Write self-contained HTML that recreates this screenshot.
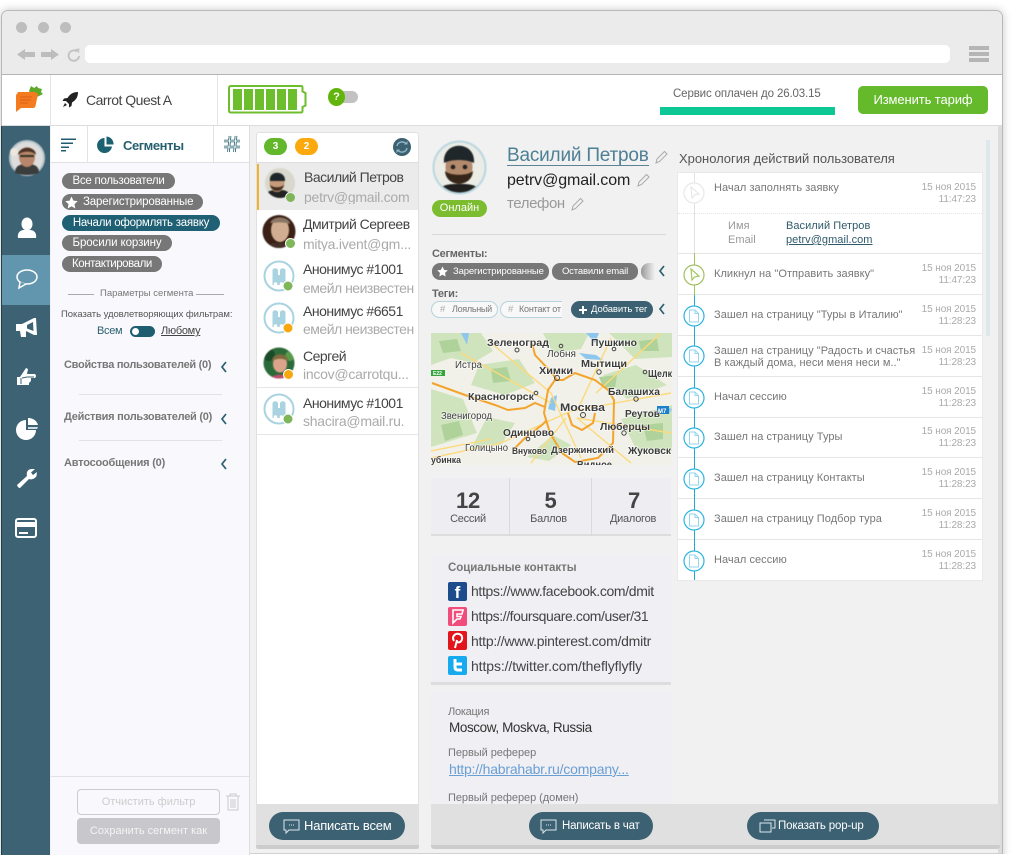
<!DOCTYPE html>
<html lang="ru"><head><meta charset="utf-8"><title>Carrot Quest</title>
<style>
html,body{margin:0;padding:0;background:#fff;width:1024px;height:855px;overflow:hidden}
body{position:relative;font-family:"Liberation Sans",sans-serif;color:#555}
#w{position:absolute;left:0;top:0;width:1024px;height:855px;overflow:hidden;background:#fff}
.a,.t,svg.a{position:absolute}
.t{white-space:nowrap;line-height:1;letter-spacing:-.25px}
.pill{position:absolute;height:16px;line-height:16px;background:#777;color:#fff;border-radius:8px;font-size:11.5px;white-space:nowrap;letter-spacing:-.25px}
.dk{background:#3c6172;color:#fff;border-radius:14px;position:absolute;height:28px;line-height:28px;font-size:12.5px;white-space:nowrap}
.rl{position:absolute;left:678px;width:304px;height:1px;background:#e6e6e6}
.tx{position:absolute;left:714px;font-size:11px;color:#777;white-space:nowrap;line-height:1;letter-spacing:.05px}
.d{position:absolute;width:70px;text-align:right;font-size:10px;line-height:12px;color:#aaa;white-space:nowrap;letter-spacing:-.1px}
.nm{position:absolute;left:303px;font-size:14px;color:#444;line-height:1;white-space:nowrap;letter-spacing:-.5px}
.em{position:absolute;left:303px;font-size:14px;color:#aaa;line-height:1;white-space:nowrap;letter-spacing:-.25px;width:113px;overflow:hidden}
.m text{font-family:"Liberation Sans",sans-serif;font-size:10px;font-weight:bold;fill:#3c3c3c;paint-order:stroke;stroke:#fff;stroke-width:1.5px;stroke-opacity:.65}
.ph{filter:blur(.5px)}
</style></head><body><div id="w">

<!-- window -->
<div class="a" style="left:1px;top:10px;width:1000px;height:860px;background:#f1f1f1;border:1px solid #b9b9b9;border-radius:7px 7px 0 0;box-shadow:0 0 9px rgba(0,0,0,.22)"></div>
<div class="a" style="left:2px;top:11px;width:1000px;height:63px;background:#ebebeb;border-radius:6px 6px 0 0;border-bottom:1px solid #b5b5b5"></div>
<div class="a" style="left:16px;top:22px;width:11px;height:11px;border-radius:50%;background:#bdbdbd"></div>
<div class="a" style="left:38px;top:22px;width:11px;height:11px;border-radius:50%;background:#bdbdbd"></div>
<div class="a" style="left:60px;top:22px;width:11px;height:11px;border-radius:50%;background:#bdbdbd"></div>
<svg class="a" style="left:16px;top:47px" width="66" height="15" viewBox="0 0 66 15"><path d="M1 7.5 9 2V5H19V10H9V13Z" fill="#bdbdbd"/><path d="M43 7.5 35 2V5H25V10H35V13Z" fill="#bdbdbd"/><path d="M61 4.5A5.2 5.2 0 1 0 63 9" fill="none" stroke="#c4c4c4" stroke-width="2"/><path d="M59 2 63.5 1.5 63 6.5Z" fill="#c4c4c4"/></svg>
<div class="a" style="left:85px;top:45px;width:865px;height:18px;background:#fff;border-radius:5px"></div>
<div class="a" style="left:969px;top:46px;width:20px;height:4px;background:#b5b5b5"></div>
<div class="a" style="left:969px;top:52px;width:20px;height:4px;background:#b5b5b5"></div>
<div class="a" style="left:969px;top:58px;width:20px;height:4px;background:#b5b5b5"></div>

<!-- header -->
<div class="a" style="left:2px;top:75px;width:1000px;height:50px;background:#fff;border-bottom:1px solid #ddd"></div>
<div class="a" style="left:50px;top:75px;width:1px;height:50px;background:#e4e4e4"></div>
<div class="a" style="left:217px;top:75px;width:1px;height:50px;background:#e4e4e4"></div>
<svg class="a" style="left:14px;top:85px" width="30" height="29" viewBox="0 0 30 29"><path d="M15 6 17 1 20 3 23 1 24 3 28 4 27 7 29 9 23 12 17 9Z" fill="#5ea82a"/><path d="M3 9Q2 9 2 11V27L7 23H19Q21 23 21.5 21L24 9Q22 7 20 7H4Z" fill="#f47b20"/><path d="M6 12H18M6 15H17M6 18H14" stroke="#d8621a" stroke-width="1"/></svg>
<svg class="a" style="left:62px;top:91px" width="17" height="17" viewBox="0 0 17 17"><path d="M16 1C11 1 8 3 5.5 7L2 7.5 .5 10 4 10 7 13 7 16.5 9.5 15 10 11.5C14 9 16 6 16 1Z" fill="#222"/><path d="M3 12 1 16 5 14Z" fill="#222"/></svg>
<div class="t" style="left:86px;top:93px;font-size:14px;color:#444;letter-spacing:-.5px">Carrot Quest A</div>
<svg class="a" style="left:228px;top:85px" width="79" height="29" viewBox="0 0 79 29"><path d="M3 1H73.500Q74.500 1 74.500 3V6.500L77.500 8V20.500L74.500 22V25.500Q74.500 27.500 73 27.500H3Q1 27.500 1 25.500V3Q1 1 3 1Z" fill="#fff" stroke="#6dbe2d" stroke-width="2"/></svg>
<div class="a" style="left:233px;top:89px;width:9px;height:21px;background:#6dbe2d"></div>
<div class="a" style="left:244px;top:89px;width:9px;height:21px;background:#6dbe2d"></div>
<div class="a" style="left:255px;top:89px;width:9px;height:21px;background:#6dbe2d"></div>
<div class="a" style="left:266px;top:89px;width:9px;height:21px;background:#6dbe2d"></div>
<div class="a" style="left:277px;top:89px;width:9px;height:21px;background:#6dbe2d"></div>
<div class="a" style="left:288px;top:89px;width:9px;height:21px;background:#6dbe2d"></div>
<div class="a" style="left:335px;top:91px;width:23px;height:12px;background:#c2c2c2;border-radius:7px"></div>
<div class="a" style="left:328px;top:88px;width:17px;height:18px;border-radius:50%;background:#62b50d;color:#fff;font:bold 11px/18px 'Liberation Sans',sans-serif;text-align:center">?</div>
<div class="t" style="left:673px;top:89px;font-size:11.5px;color:#666;letter-spacing:-.13px">Сервис оплачен до 26.03.15</div>
<div class="a" style="left:660px;top:107px;width:175px;height:8px;background:#0dc794"></div>
<div class="a" style="left:858px;top:86px;width:130px;height:28px;background:#64ba2a;border-radius:5px;color:#fff;font-size:13px;line-height:28px;text-align:center;letter-spacing:-.1px">Изменить тариф</div>

<!-- sidebar -->
<div class="a" style="left:2px;top:126px;width:48px;height:729px;background:#3d6274"></div>
<div class="a" style="left:1px;top:126px;width:1px;height:729px;background:#223f4c"></div>
<div class="a" style="left:2px;top:255px;width:48px;height:50px;background:#6296ae"></div>
<svg class="a ph" style="left:9px;top:140px" width="36" height="36" viewBox="0 0 36 36"><circle cx="18" cy="18" r="17" fill="#ddd" stroke="#b9c6cc" stroke-width="2"/><path d="M6 33C6 25 12 24 18 24S30 25 30 33Q18 37 6 33Z" fill="#3b3d3c"/><ellipse cx="18" cy="17" rx="8" ry="10" fill="#b8866a"/><path d="M9 15C9 6 27 5 27 15 24 11 14 10 9 15Z" fill="#4c3425"/><path d="M11 16H25" stroke="#332" stroke-width="2"/><circle cx="5" cy="12" r="4" fill="#ece8dd"/></svg>
<svg class="a" style="left:14px;top:217px" width="26" height="22" viewBox="0 0 26 22"><ellipse cx="13" cy="7" rx="5.5" ry="6.5" fill="#fff"/><path d="M4 21C3 15 7 13 10 13H16C19 13 23 15 22 21Z" fill="#fff"/></svg>
<svg class="a" style="left:14px;top:267px" width="26" height="24" viewBox="0 0 26 24"><ellipse cx="13" cy="10" rx="10" ry="7" fill="none" stroke="#fff" stroke-width="1.500"/><path d="M6 15 5 21 12 17" fill="#6296ae" stroke="#fff" stroke-width="1.500"/></svg>
<svg class="a" style="left:14px;top:316px" width="26" height="24" viewBox="0 0 26 24"><path d="M2 8H8L20 2 22 2 23 19 20 19 12 15 12 21 7 21 6 15 2 15Z" fill="#fff"/><path d="M13 9 19 6 19.5 15 13 12.5Z" fill="#3d6274"/></svg>
<svg class="a" style="left:14px;top:366px" width="26" height="24" viewBox="0 0 26 24"><path d="M3 11H6L12 2 14 3 13 8H21Q23 10 21 12H17V15L15 17V19H6V19H3Z" fill="#fff"/><path d="M7 12V18M8 12 13 11H20" fill="none" stroke="#3d6274" stroke-width="1"/></svg>
<svg class="a" style="left:14px;top:416px" width="26" height="24" viewBox="0 0 26 24"><path d="M12 4A10 10 0 1 0 22 14H12Z" fill="#fff"/><path d="M14 2A10 10 0 0 1 24 9H14Z" fill="#fff"/><path d="M14 11H24A10 10 0 0 1 23 13H14Z" fill="#cfdde3"/></svg>
<svg class="a" style="left:15px;top:466px" width="24" height="24" viewBox="0 0 24 24"><path d="M2 19 12 10C11 6 13 3 17 3L20 3 16 6.5 18 9 22 6 21.5 10C20 13 16 14 14 13L5 22Q3 22 2 19Z" fill="#fff"/></svg>
<div class="a" style="left:15px;top:518px;width:22px;height:20px;border:2px solid #fff;border-radius:3px;box-sizing:border-box"></div>
<div class="a" style="left:15px;top:522px;width:22px;height:5px;background:#fff"></div>
<div class="a" style="left:19px;top:532px;width:9px;height:2px;background:#fff"></div>

<!-- left panel -->
<div class="a" style="left:51px;top:126px;width:198px;height:729px;background:#f9f9fd;border-right:1px solid #ddd"></div>
<div class="a" style="left:51px;top:126px;width:198px;height:36px;background:#fff;border-bottom:1px solid #e0e0e6"></div>
<div class="a" style="left:87px;top:126px;width:1px;height:36px;background:#e2e2e8"></div>
<div class="a" style="left:213px;top:126px;width:1px;height:36px;background:#e2e2e8"></div>
<svg class="a" style="left:60px;top:137px" width="18" height="16" viewBox="0 0 18 16"><path d="M1 1.5H16V3H1ZM1 5.500H13V7H1ZM1 9.500H9V11H1ZM1 13H6V14.500H1Z" fill="#1f5e6e"/></svg>
<svg class="a" style="left:96px;top:135px" width="20" height="20" viewBox="0 0 20 20"><path d="M8.500 3A7.500 7.500 0 1 0 16 11.500H8.500Z" fill="#1c6170"/><path d="M10.500 1.500A7.500 7.500 0 0 1 17.500 9.500H10.500Z" fill="#1c6170"/></svg>
<div class="t" style="left:123px;top:139px;font-size:13px;font-weight:bold;color:#26606f;letter-spacing:-.45px">Сегменты</div>
<svg class="a" style="left:223px;top:135px" width="18" height="18" viewBox="0 0 18 18"><path d="M7 1 5.500 17M13 1 11.500 17M1 6H17M1 12H17" stroke="#1f5e6e" stroke-width="2.600" fill="none"/><path d="M7 1 5.500 17M13 1 11.500 17M1 6H17M1 12H17" stroke="#fff" stroke-width="1" fill="none"/></svg>

<div class="pill" style="left:62px;top:173px;width:113px;text-align:center">Все пользователи</div>
<div class="pill" style="left:62px;top:194px;width:141px;padding-left:21px;box-sizing:border-box;letter-spacing:-.15px">Зарегистрированные</div>
<svg class="a" style="left:65px;top:196px" width="13" height="13" viewBox="0 0 24 24"><path d="M12 1 15.500 8.500 23.500 9.500 17.500 15 19 23 12 19 5 23 6.500 15 .5 9.500 8.500 8.500Z" fill="#fff"/></svg>
<div class="pill" style="left:62px;top:215px;width:158px;background:#1f6074;text-align:center">Начали оформлять заявку</div>
<div class="pill" style="left:62px;top:235px;width:110px;text-align:center;letter-spacing:-.1px">Бросили корзину</div>
<div class="pill" style="left:62px;top:256px;width:100px;padding-left:10px;box-sizing:border-box;letter-spacing:-.45px">Контактировали</div>

<div class="a" style="left:68px;top:294px;width:26px;height:1px;background:#aaa"></div>
<div class="a" style="left:196px;top:294px;width:28px;height:1px;background:#aaa"></div>
<div class="t" style="left:100px;top:289px;font-size:9.500px;color:#777;letter-spacing:0">Параметры сегмента</div>
<div class="t" style="left:61px;top:310px;font-size:9.500px;color:#555;letter-spacing:-.05px">Показать удовлетворяющих фильтрам:</div>
<div class="t" style="left:97px;top:326px;font-size:11px;color:#2c5f6e;letter-spacing:-.3px">Всем</div>
<div class="a" style="left:130px;top:326px;width:25px;height:11px;background:#1f5e70;border-radius:6px"></div>
<div class="a" style="left:132px;top:328px;width:7px;height:7px;background:#fff;border-radius:50%"></div>
<div class="t" style="left:161px;top:326px;font-size:11px;color:#444;letter-spacing:-.3px;text-decoration:underline">Любому</div>
<div class="t" style="left:64px;top:360px;font-size:11px;font-weight:bold;color:#777;letter-spacing:-.28px">Свойства пользователей (0)</div>
<svg class="a" style="left:220px;top:361px" width="8" height="12" viewBox="0 0 8 12"><path d="M6 1 2 6 6 11" stroke="#2b6070" stroke-width="1.700" fill="none"/></svg>
<div class="a" style="left:79px;top:394px;width:143px;height:1px;background:#e2e2e8"></div>
<div class="t" style="left:64px;top:412px;font-size:11px;font-weight:bold;color:#777;letter-spacing:-.25px">Действия пользователей (0)</div>
<svg class="a" style="left:220px;top:413px" width="8" height="12" viewBox="0 0 8 12"><path d="M6 1 2 6 6 11" stroke="#2b6070" stroke-width="1.700" fill="none"/></svg>
<div class="a" style="left:79px;top:440px;width:143px;height:1px;background:#e2e2e8"></div>
<div class="t" style="left:64px;top:458px;font-size:11px;font-weight:bold;color:#777;letter-spacing:-.2px">Автосообщения (0)</div>
<svg class="a" style="left:220px;top:458px" width="8" height="12" viewBox="0 0 8 12"><path d="M6 1 2 6 6 11" stroke="#2b6070" stroke-width="1.700" fill="none"/></svg>

<div class="a" style="left:51px;top:776px;width:198px;height:1px;background:#e0e0e6"></div>
<div class="a" style="left:77px;top:789px;width:143px;height:26px;box-sizing:border-box;border:1px solid #ccc;border-radius:4px;color:#ccc;font-size:11px;line-height:24px;text-align:center">Отчистить фильтр</div>
<div class="a" style="left:77px;top:818px;width:143px;height:26px;background:#c8c8cc;border-radius:4px;color:#f4f4f4;font-size:11px;line-height:26px;text-align:center">Сохранить сегмент как</div>
<svg class="a" style="left:225px;top:793px" width="16" height="18" viewBox="0 0 16 18"><path d="M1 3H15M5 3V1H11V3M3 3V17H13V3M6 6V15M8 6V15M10 6V15" fill="none" stroke="#ccc" stroke-width="1"/></svg>

<!-- conversations -->
<div class="a" style="left:256px;top:132px;width:161px;height:715px;background:#fff;border:1px solid #e0e0e0;border-radius:3px 3px 0 0"></div>
<div class="a" style="left:257px;top:162px;width:161px;height:1px;background:#ddd"></div>
<div class="a" style="left:264px;top:138px;width:23px;height:17px;border-radius:9px;background:#62b82a;color:#fff;font:bold 10px/17px 'Liberation Sans',sans-serif;text-align:center">3</div>
<div class="a" style="left:295px;top:138px;width:23px;height:17px;border-radius:9px;background:#fca90e;color:#fff;font:bold 10px/17px 'Liberation Sans',sans-serif;text-align:center">2</div>
<svg class="a" style="left:393px;top:138px" width="18" height="18" viewBox="0 0 18 18"><circle cx="9" cy="9" r="9" fill="#3c6172"/><path d="M4 8A5 5 0 0 1 13 6M14 10A5 5 0 0 1 5 12" fill="none" stroke="#8fb7c6" stroke-width="1.400"/><path d="M11 6.500H14.500V3ZM7 11.500H3.500V15Z" fill="#8fb7c6"/></svg>
<div class="a" style="left:257px;top:163px;width:161px;height:47px;background:#ebebeb"></div>
<div class="a" style="left:257px;top:164px;width:2px;height:46px;background:#f1b32d"></div>

<svg class="a ph" style="left:265px;top:168px" width="31" height="34" viewBox="0 0 31 34"><defs><clipPath id="c1"><circle cx="15" cy="15" r="15"/></clipPath></defs><g clip-path="url(#c1)"><rect width="30" height="30" fill="#d8d8cc"/><path d="M0 30C0 22 8 22 15 22S24 24 26 30Z" fill="#222"/><ellipse cx="12" cy="15" rx="7.500" ry="9" fill="#c69a7b"/><path d="M5 13C3 2 21 2 20 13Z" fill="#20272a"/><path d="M5 17C7 25 17 25 19 17 15 20 9 20 5 17Z" fill="#443022"/></g></svg>
<div class="a" style="left:285px;top:192px;width:11px;height:11px;border-radius:50%;background:#7fb659;border:1px solid #ebebeb;box-sizing:border-box"></div>
<svg class="a ph" style="left:262px;top:215px" width="34" height="34" viewBox="0 0 34 34"><defs><clipPath id="c2"><circle cx="17" cy="16.500" r="16.500"/></clipPath></defs><g clip-path="url(#c2)"><rect width="34" height="34" fill="#3a2015"/><ellipse cx="18" cy="15" rx="9" ry="12" fill="#d1ae91"/><path d="M8 8C12 -1 28 2 28 9 20 6 12 8 8 8Z" fill="#8a7765"/><path d="M9 28H26V34H9Z" fill="#443028"/></g></svg>
<div class="a" style="left:285px;top:238px;width:11px;height:11px;border-radius:50%;background:#7fb659;border:1px solid #fff;box-sizing:border-box"></div>
<svg class="a" style="left:263px;top:260px" width="33" height="34" viewBox="0 0 33 34"><circle cx="16" cy="16" r="14.500" fill="#fff" stroke="#a9d3e0" stroke-width="2"/><path d="M9.500 25V10A3 3 0 0 1 15 10V15H17V10A3 3 0 0 1 22.500 10V25Z" fill="#a9d3e0"/><circle cx="12.500" cy="24" r="1.800" fill="#fff"/><circle cx="18.500" cy="24" r="1.800" fill="#fff"/><circle cx="25" cy="26" r="5" fill="#7fb659" stroke="#fff"/></svg>
<svg class="a" style="left:263px;top:302px" width="33" height="34" viewBox="0 0 33 34"><circle cx="16" cy="16" r="14.500" fill="#fff" stroke="#a9d3e0" stroke-width="2"/><path d="M9.500 25V10A3 3 0 0 1 15 10V15H17V10A3 3 0 0 1 22.500 10V25Z" fill="#a9d3e0"/><circle cx="12.500" cy="24" r="1.800" fill="#fff"/><circle cx="18.500" cy="24" r="1.800" fill="#fff"/><circle cx="25" cy="26" r="5" fill="#f9a70f" stroke="#fff"/></svg>
<svg class="a ph" style="left:263px;top:347px" width="33" height="34" viewBox="0 0 33 34"><defs><clipPath id="c3"><circle cx="16" cy="16" r="15.500"/></clipPath></defs><g clip-path="url(#c3)"><rect width="33" height="33" fill="#2d6a3a"/><circle cx="6" cy="8" r="6" fill="#1b4a28"/><circle cx="27" cy="9" r="5" fill="#5a9a4c"/><ellipse cx="17" cy="17" rx="7" ry="8.500" fill="#dca48a"/><path d="M9 14C9 5 25 5 25 14 20 11 14 11 9 14Z" fill="#7f6a3f"/><path d="M7 33C8 26 26 26 27 33Z" fill="#c24d6a"/></g></svg>
<div class="a" style="left:283px;top:369px;width:11px;height:11px;border-radius:50%;background:#f9a70f;border:1px solid #fff;box-sizing:border-box"></div>
<svg class="a" style="left:263px;top:393px" width="33" height="34" viewBox="0 0 33 34"><circle cx="16" cy="16" r="14.500" fill="#fff" stroke="#a9d3e0" stroke-width="2"/><path d="M9.500 25V10A3 3 0 0 1 15 10V15H17V10A3 3 0 0 1 22.500 10V25Z" fill="#a9d3e0"/><circle cx="12.500" cy="24" r="1.800" fill="#fff"/><circle cx="18.500" cy="24" r="1.800" fill="#fff"/><circle cx="25" cy="26" r="5" fill="#7fb659" stroke="#fff"/></svg>

<div class="nm" style="left:304px;top:170px">Василий Петров</div><div class="em" style="left:304px;top:190px">petrv@gmail.com</div>
<div class="nm" style="top:217px">Дмитрий Сергеев</div><div class="em" style="top:237px">mitya.ivent@gm...</div>
<div class="nm" style="top:262px">Анонимус #1001</div><div class="em" style="top:281px;letter-spacing:-.5px">емейл неизвестен</div>
<div class="nm" style="top:304px">Анонимус #6651</div><div class="em" style="top:322px;letter-spacing:-.5px">емейл неизвестен</div>
<div class="a" style="left:257px;top:387px;width:161px;height:1px;background:#e6e6e6"></div>
<div class="nm" style="top:349px">Сергей</div><div class="em" style="top:367px">incov@carrotqu...</div>
<div class="nm" style="top:396px">Анонимус #1001</div><div class="em" style="top:414px">shacira@mail.ru.</div>
<div class="a" style="left:257px;top:434px;width:161px;height:1px;background:#e6e6e6"></div>

<div class="a" style="left:256px;top:804px;width:163px;height:41px;background:#e0e0e0;border-bottom:4px solid #ccc;border-radius:0 0 3px 3px"></div>
<div class="dk" style="left:269px;top:812px;width:136px;padding-left:35px;box-sizing:border-box;font-size:13px;letter-spacing:-.2px">Написать всем</div>
<svg class="a" style="left:283px;top:819px" width="17" height="16" viewBox="0 0 17 16"><path d="M1 1H16V11H6L3 14V11H1Z" fill="none" stroke="#dce7ec"/><path d="M6 6H7M8 6H9M10 6H11" stroke="#dce7ec"/></svg>

<!-- profile -->
<svg class="a ph" style="left:432px;top:140px" width="55" height="55" viewBox="0 0 55 55"><defs><clipPath id="c4"><circle cx="27.500" cy="27.500" r="25"/></clipPath></defs><circle cx="27.500" cy="27.500" r="27" fill="#b8d6e0"/><g clip-path="url(#c4)"><rect width="55" height="55" fill="#ececE6"/><path d="M4 55C8 44 16 44 27 44S47 44 50 55Z" fill="#202020"/><ellipse cx="27" cy="27" rx="13.500" ry="17" fill="#b48a6c"/><path d="M12 23C10 0 44 0 42 23 34 19 20 19 12 23Z" fill="#20272a"/><path d="M13 31C14 48 40 48 41 31 36 36 18 36 13 31Z" fill="#362619"/><circle cx="21" cy="27" r="2.300" fill="#222"/><circle cx="33" cy="27" r="2.300" fill="#222"/></g></svg>
<div class="a" style="left:432px;top:200px;width:55px;height:17px;border-radius:9px;background:#7cbc2f;color:#fff;font-size:11px;line-height:17px;text-align:center">Онлайн</div>
<div class="t" style="left:507px;top:146px;font-size:19px;color:#4d7f95;letter-spacing:-.2px;border-bottom:1px solid #5b8394">Василий Петров</div>
<div class="t" style="left:507px;top:173px;font-size:16px;color:#222;letter-spacing:-.1px">petrv@gmail.com</div>
<div class="t" style="left:507px;top:196px;font-size:15px;color:#999;letter-spacing:-.4px">телефон</div>
<svg class="a" style="left:655px;top:150px" width="13" height="14" viewBox="0 0 13 14"><path d="M1 13 2 9 9.500 1.500 12 4 4.500 11.500Z" fill="none" stroke="#aaa"/></svg>
<svg class="a" style="left:637px;top:173px" width="13" height="14" viewBox="0 0 13 14"><path d="M1 13 2 9 9.500 1.500 12 4 4.500 11.500Z" fill="none" stroke="#aaa"/></svg>
<svg class="a" style="left:571px;top:197px" width="13" height="14" viewBox="0 0 13 14"><path d="M1 13 2 9 9.500 1.500 12 4 4.500 11.500Z" fill="none" stroke="#aaa"/></svg>
<div class="a" style="left:432px;top:234px;width:234px;height:1px;background:#d9d9d9"></div>
<div class="t" style="left:432px;top:249px;font-size:11px;font-weight:bold;color:#666;letter-spacing:-.3px">Сегменты:</div>
<div class="pill" style="left:432px;top:263px;width:117px;height:17px;line-height:17px;font-size:9.500px;padding-left:21px;box-sizing:border-box;letter-spacing:-.15px">Зарегистрированные</div>
<svg class="a" style="left:437px;top:266px" width="11" height="11" viewBox="0 0 24 24"><path d="M12 1 15.500 8.500 23.500 9.500 17.500 15 19 23 12 19 5 23 6.500 15 .5 9.500 8.500 8.500Z" fill="#fff"/></svg>
<div class="pill" style="left:552px;top:263px;width:86px;height:17px;line-height:17px;font-size:9.500px;text-align:center;letter-spacing:-.15px">Оставили email</div>
<div class="a" style="left:641px;top:263px;width:14px;height:17px;background:linear-gradient(90deg,#999,#f2f2f2);border-radius:8px 0 0 8px"></div>
<svg class="a" style="left:658px;top:265px" width="8" height="12" viewBox="0 0 8 12"><path d="M6 1 2 6 6 11" stroke="#2b6070" stroke-width="1.700" fill="none"/></svg>
<div class="t" style="left:432px;top:289px;font-size:11px;font-weight:bold;color:#666">Теги:</div>
<div class="a" style="left:431px;top:301px;width:67px;height:17px;border:1px solid #b6d3dc;border-radius:9px;box-sizing:border-box;background:#f8f8f8"></div>
<div class="t" style="left:440px;top:305px;font-size:9.500px;color:#aaa">#</div>
<div class="t" style="left:452px;top:305px;font-size:9px;color:#777;letter-spacing:-.3px">Лояльный</div>
<div class="a" style="left:500px;top:301px;width:62px;height:17px;border:1px solid #b6d3dc;border-right:0;border-radius:9px 0 0 9px;box-sizing:border-box;background:#f8f8f8"></div>
<div class="t" style="left:508px;top:305px;font-size:9.500px;color:#aaa">#</div>
<div class="t" style="left:519px;top:305px;font-size:9px;color:#777;letter-spacing:-.2px;width:42px;overflow:hidden">Контакт от</div>
<div class="a" style="left:571px;top:301px;width:82px;height:17px;border-radius:9px;background:#3c6172;color:#fff;font-size:9.500px;line-height:17px;padding-left:20px;box-sizing:border-box;letter-spacing:-.1px;white-space:nowrap">Добавить тег</div>
<div class="a" style="left:579px;top:309px;width:8px;height:2px;background:#fff"></div>
<div class="a" style="left:582px;top:306px;width:2px;height:8px;background:#fff"></div>
<svg class="a" style="left:658px;top:303px" width="8" height="12" viewBox="0 0 8 12"><path d="M6 1 2 6 6 11" stroke="#2b6070" stroke-width="1.700" fill="none"/></svg>

<!-- map -->
<svg class="a" style="left:431px;top:333px;filter:blur(.35px)" width="241" height="132" viewBox="0 0 241 132">
<rect width="241" height="132" fill="#f1f1e9"/>
<g fill="#cfe4bd"><path d="M0 0H50L62 18 42 30 20 25 0 32Z"/><path d="M48 32 88 26 104 50 74 62 40 52Z"/><path d="M0 56 32 66 46 100 0 114Z"/><path d="M56 84 84 90 70 112 40 116Z"/><path d="M172 42 205 32 236 52 196 66Z"/><path d="M112 0H158L150 16 122 20Z"/><path d="M190 86 241 72V118H206Z"/><path d="M178 0H241V24L204 26Z"/><path d="M122 102 140 112 118 128 96 124Z"/></g>
<g fill="#aed29a"><path d="M8 8 26 6 30 18 12 20Z"/><path d="M60 36 76 34 80 48 62 50Z"/><path d="M10 92 28 88 32 102 14 108Z"/><path d="M208 8 226 6 228 18 210 18Z"/><path d="M212 92 232 90 232 106 216 108Z"/><path d="M168 44 186 42 184 56 172 54Z"/></g>
<g fill="#8fc6ee"><path d="M30 0 38 0 36 12Z"/><path d="M148 20 165 22 172 27 155 26Z"/><path d="M155 0H168L164 10Z"/><path d="M120 65 126 62 124 78 117 76Z"/><path d="M232 73 241 76 238 81Z"/></g>
<g fill="none" stroke="#fdd978" stroke-width="1.400"><path d="M0 125 70 110 140 78 240 60"/><path d="M60 10 120 60 150 125"/><path d="M146 85 200 130"/><path d="M135 85 100 130"/><path d="M146 78 180 5"/><path d="M146 85 240 100"/><path d="M30 20 120 70"/><path d="M230 0 165 60"/><path d="M0 118 60 106"/></g>
<g fill="none" stroke="#f3a42c" stroke-width="2"><path d="M124 47 117 57 113 80 119 100 131 120 144 129 167 125 182 110 183 67 177 57 164 47 144 40 132 47Z"/><path d="M1 50 34 62 64 72 77 77 94 75 104 70 114 74"/><path d="M101 10 104 22 121 40 126 47"/><path d="M82 117 94 105 111 92 116 87"/><path d="M137 80 141 92 151 97 162 90 164 80"/></g>
<rect x="0" y="37" width="14" height="6" fill="#36a33b"/>
<rect x="226" y="73" width="12" height="8" fill="#1c7fc9"/>
<g class="m">
<text x="56" y="13" textLength="62" lengthAdjust="spacingAndGlyphs">Зеленоград</text>
<text x="116" y="24" textLength="29" lengthAdjust="spacingAndGlyphs" style="font-weight:normal">Лобня</text>
<text x="160" y="13" textLength="46" lengthAdjust="spacingAndGlyphs">Пушкино</text>
<text x="24" y="35" textLength="27" lengthAdjust="spacingAndGlyphs" style="font-weight:normal">Истра</text>
<text x="108" y="41" textLength="34" lengthAdjust="spacingAndGlyphs">Химки</text>
<text x="150" y="34" textLength="46" lengthAdjust="spacingAndGlyphs">Мытищи</text>
<text x="217" y="44" textLength="24" lengthAdjust="spacingAndGlyphs">Щелк</text>
<text x="37" y="67" textLength="66" lengthAdjust="spacingAndGlyphs">Красногорск</text>
<text x="177" y="62" textLength="52" lengthAdjust="spacingAndGlyphs">Балашиха</text>
<text x="129" y="78" textLength="45" lengthAdjust="spacingAndGlyphs" style="font-size:11px">Москва</text>
<text x="10" y="86" textLength="51" lengthAdjust="spacingAndGlyphs" style="font-weight:normal">Звенигород</text>
<text x="194" y="84" textLength="35" lengthAdjust="spacingAndGlyphs">Реутов</text>
<text x="169" y="97" textLength="50" lengthAdjust="spacingAndGlyphs">Люберцы</text>
<text x="72" y="103" textLength="51" lengthAdjust="spacingAndGlyphs">Одинцово</text>
<text x="34" y="118" textLength="43" lengthAdjust="spacingAndGlyphs" style="font-weight:normal">Голицыно</text>
<text x="81" y="121" textLength="35" lengthAdjust="spacingAndGlyphs" style="font-size:9px">Внуково</text>
<text x="120" y="120" textLength="63" lengthAdjust="spacingAndGlyphs" style="font-size:9px">Дзержинский</text>
<text x="197" y="121" textLength="43" lengthAdjust="spacingAndGlyphs">Жуковск</text>
<text x="0" y="130" textLength="30" lengthAdjust="spacingAndGlyphs" style="font-size:9px">убинка</text>
<text x="146" y="135" textLength="35" lengthAdjust="spacingAndGlyphs">Видное</text>
</g>
<text x="2" y="42" style="font:bold 5px 'Liberation Sans',sans-serif;fill:#fff">E22</text>
<text x="227" y="80" style="font:bold 6px 'Liberation Sans',sans-serif;fill:#fff">M7</text>
<g fill="none" stroke="#444"><circle cx="152" cy="82" r="2.500"/><circle cx="126" cy="45" r="2.500"/><circle cx="86" cy="17" r="2"/><circle cx="168" cy="39" r="2.200"/><circle cx="130" cy="13" r="1.800"/><circle cx="183" cy="16" r="1.800"/><circle cx="205" cy="66" r="2.200"/><circle cx="193" cy="100" r="2.200"/><circle cx="214" cy="39" r="1.800"/><circle cx="97" cy="106" r="1.800"/><circle cx="105" cy="60" r="1.800"/></g>
</svg>

<!-- stats -->
<div class="a" style="left:431px;top:478px;width:240px;height:58px;background:#ededf2;border-bottom:2px solid #ddd;box-sizing:border-box"></div>
<div class="a" style="left:509px;top:478px;width:1px;height:58px;background:#d9d9de"></div>
<div class="a" style="left:591px;top:478px;width:1px;height:58px;background:#d9d9de"></div>
<div class="t" style="left:429px;width:78px;text-align:center;top:490px;font-size:22px;font-weight:bold;color:#444">12</div>
<div class="t" style="left:510px;width:81px;text-align:center;top:490px;font-size:22px;font-weight:bold;color:#444">5</div>
<div class="t" style="left:594px;width:80px;text-align:center;top:490px;font-size:22px;font-weight:bold;color:#444">7</div>
<div class="t" style="left:429px;width:78px;text-align:center;top:514px;font-size:11px;color:#555">Сессий</div>
<div class="t" style="left:510px;width:77px;text-align:center;top:514px;font-size:11px;color:#555">Баллов</div>
<div class="t" style="left:592px;width:82px;text-align:center;top:514px;font-size:11px;color:#555">Диалогов</div>

<!-- social -->
<div class="a" style="left:431px;top:554px;width:240px;height:131px;background:#efeff4;border-bottom:3px solid #ddd;box-sizing:border-box"></div>
<div class="t" style="left:448px;top:562px;font-size:11.500px;font-weight:bold;color:#777;letter-spacing:-.05px;margin-top:1px">Социальные контакты</div>
<div class="a" style="left:448px;top:582px;width:19px;height:19px;background:#1c4c8c;border-radius:2px;color:#fff;font:bold 17px/21px 'Liberation Sans',sans-serif;text-align:center">f</div>
<div class="a" style="left:448px;top:607px;width:19px;height:19px;background:#f04d7c;border-radius:2px"></div>
<svg class="a" style="left:448px;top:607px" width="19" height="19" viewBox="0 0 19 19"><path d="M5 3H15L14 7H9V9.500H13L12 12H9L5 16Z" fill="none" stroke="#fff" stroke-width="1.600"/></svg>
<div class="a" style="left:448px;top:631px;width:19px;height:19px;background:#e2151d;border-radius:2px"></div>
<svg class="a" style="left:448px;top:631px" width="19" height="19" viewBox="0 0 19 19"><path d="M7 17 9 9M6 10C3 5 8 2 11 3 15 4 15 9 12 11 10 12 9 11 9 10" fill="none" stroke="#fff" stroke-width="2"/></svg>
<div class="a" style="left:448px;top:656px;width:19px;height:19px;background:#17aaee;border-radius:2px"></div>
<svg class="a" style="left:448px;top:656px" width="19" height="19" viewBox="0 0 19 19"><path d="M7 3V11Q7 14 10 14H14M7 8H14" fill="none" stroke="#fff" stroke-width="3"/></svg>
<div class="t" style="left:471px;top:584px;font-size:14px;color:#444;letter-spacing:-.35px">https://www.facebook.com/dmit</div>
<div class="t" style="left:471px;top:609px;font-size:14px;color:#444;letter-spacing:-.42px">https://foursquare.com/user/31</div>
<div class="t" style="left:471px;top:634px;font-size:14px;color:#444;letter-spacing:-.25px">http://www.pinterest.com/dmitr</div>
<div class="t" style="left:471px;top:659px;font-size:14px;color:#444;letter-spacing:-.1px">https://twitter.com/theflyflyfly</div>

<!-- info -->
<div class="a" style="left:430px;top:691px;width:241px;height:120px;background:#efeff4"></div>
<div class="t" style="left:448px;top:707px;font-size:11px;color:#777">Локация</div>
<div class="t" style="left:449px;top:721px;font-size:13.500px;color:#333;letter-spacing:-.4px">Moscow, Moskva, Russia</div>
<div class="t" style="left:448px;top:748px;font-size:11px;color:#777;letter-spacing:-.05px">Первый реферер</div>
<div class="t" style="left:449px;top:762px;font-size:14px;color:#6a9fd4;letter-spacing:-.2px;text-decoration:underline">http://habrahabr.ru/company...</div>
<div class="t" style="left:448px;top:793px;font-size:11px;color:#777;letter-spacing:-.05px">Первый реферер (домен)</div>

<!-- timeline -->
<div class="t" style="left:679px;top:152px;font-size:13px;color:#555;letter-spacing:-.03px">Хронология действий пользователя</div>
<div class="a" style="left:677px;top:172px;width:306px;height:409px;background:#fff;border:1px solid #e9e9e9;box-sizing:border-box"></div>
<div class="a" style="left:986px;top:140px;width:4px;height:196px;background:#dbe8ec"></div>
<div class="a" style="left:998px;top:126px;width:4px;height:729px;background:#dcdcdc"></div>
<div class="rl" style="top:213px;background:none;border-top:1px dotted #e5e5e5"></div>
<div class="rl" style="top:253px"></div><div class="rl" style="top:294px"></div><div class="rl" style="top:335px"></div><div class="rl" style="top:376px"></div><div class="rl" style="top:417px"></div><div class="rl" style="top:457px"></div><div class="rl" style="top:498px"></div><div class="rl" style="top:539px"></div>
<div class="a" style="left:694px;top:173px;width:1px;height:80px;background:#e2e2e2"></div>
<div class="a" style="left:694px;top:253px;width:1px;height:42px;background:#9dc757"></div>
<div class="a" style="left:694px;top:295px;width:1px;height:285px;background:#1fa8d8"></div>

<svg class="a" style="left:683px;top:182px" width="22" height="22" viewBox="0 0 22 22"><circle cx="11" cy="11" r="10" fill="#fff" stroke="#e8e8e8" stroke-width="1.200"/><path d="M8 5 9 16 11.500 13 16 12Z" fill="none" stroke="#e4e4e4"/></svg>
<svg class="a" style="left:683px;top:264px" width="22" height="22" viewBox="0 0 22 22"><circle cx="11" cy="11" r="10" fill="#fff" stroke="#a3bf62" stroke-width="1.200"/><path d="M8 5 9 16 11.500 13 16 12Z" fill="none" stroke="#a3c85b" stroke-width="1.200"/></svg>
<svg class="a" style="left:683px;top:305px" width="22" height="22" viewBox="0 0 22 22"><circle cx="11" cy="11" r="10" fill="#fff" stroke="#2cb3de" stroke-width="1.200"/><path d="M6.500 5H12L15.500 8.500V17H6.500ZM12 5V8.500H15.500" fill="none" stroke="#90d6ee"/></svg>
<svg class="a" style="left:683px;top:345px" width="22" height="22" viewBox="0 0 22 22"><circle cx="11" cy="11" r="10" fill="#fff" stroke="#2cb3de" stroke-width="1.200"/><path d="M6.500 5H12L15.500 8.500V17H6.500ZM12 5V8.500H15.500" fill="none" stroke="#90d6ee"/></svg>
<svg class="a" style="left:683px;top:387px" width="22" height="22" viewBox="0 0 22 22"><circle cx="11" cy="11" r="10" fill="#fff" stroke="#2cb3de" stroke-width="1.200"/><path d="M6.500 5H12L15.500 8.500V17H6.500ZM12 5V8.500H15.500" fill="none" stroke="#90d6ee"/></svg>
<svg class="a" style="left:683px;top:427px" width="22" height="22" viewBox="0 0 22 22"><circle cx="11" cy="11" r="10" fill="#fff" stroke="#2cb3de" stroke-width="1.200"/><path d="M6.500 5H12L15.500 8.500V17H6.500ZM12 5V8.500H15.500" fill="none" stroke="#90d6ee"/></svg>
<svg class="a" style="left:683px;top:468px" width="22" height="22" viewBox="0 0 22 22"><circle cx="11" cy="11" r="10" fill="#fff" stroke="#2cb3de" stroke-width="1.200"/><path d="M6.500 5H12L15.500 8.500V17H6.500ZM12 5V8.500H15.500" fill="none" stroke="#90d6ee"/></svg>
<svg class="a" style="left:683px;top:509px" width="22" height="22" viewBox="0 0 22 22"><circle cx="11" cy="11" r="10" fill="#fff" stroke="#2cb3de" stroke-width="1.200"/><path d="M6.500 5H12L15.500 8.500V17H6.500ZM12 5V8.500H15.500" fill="none" stroke="#90d6ee"/></svg>
<svg class="a" style="left:683px;top:550px" width="22" height="22" viewBox="0 0 22 22"><circle cx="11" cy="11" r="10" fill="#fff" stroke="#2cb3de" stroke-width="1.200"/><path d="M6.500 5H12L15.500 8.500V17H6.500ZM12 5V8.500H15.500" fill="none" stroke="#90d6ee"/></svg>

<div class="tx" style="top:183px">Начал заполнять заявку</div>
<div class="tx" style="left:728px;top:221px;color:#999">Имя</div>
<div class="tx" style="left:728px;top:235px;color:#999">Email</div>
<div class="tx" style="left:786px;top:221px;color:#2f5a6a">Василий Петров</div>
<div class="tx" style="left:786px;top:235px;color:#2f5a6a;text-decoration:underline">petrv@gmail.com</div>
<div class="tx" style="top:269px">Кликнул на "Отправить заявку"</div>
<div class="tx" style="top:310px">Зашел на страницу "Туры в Италию"</div>
<div class="tx" style="top:346px">Зашел на страницу "Радость и счастья</div>
<div class="tx" style="top:358px">В каждый дома, неси меня неси м.."</div>
<div class="tx" style="top:392px">Начал сессию</div>
<div class="tx" style="top:432px">Зашел на страницу Туры</div>
<div class="tx" style="top:473px">Зашел на страницу Контакты</div>
<div class="tx" style="top:514px">Зашел на страницу Подбор тура</div>
<div class="tx" style="top:555px">Начал сессию</div>

<div class="d" style="left:906px;top:182px">15 ноя 2015<br>11:47:23</div>
<div class="d" style="left:906px;top:263px">15 ноя 2015<br>11:47:23</div>
<div class="d" style="left:906px;top:304px">15 ноя 2015<br>11:28:23</div>
<div class="d" style="left:906px;top:345px">15 ноя 2015<br>11:28:23</div>
<div class="d" style="left:906px;top:386px">15 ноя 2015<br>11:28:23</div>
<div class="d" style="left:906px;top:426px">15 ноя 2015<br>11:28:23</div>
<div class="d" style="left:906px;top:467px">15 ноя 2015<br>11:28:23</div>
<div class="d" style="left:906px;top:508px">15 ноя 2015<br>11:28:23</div>
<div class="d" style="left:906px;top:549px">15 ноя 2015<br>11:28:23</div>

<!-- bottom bar -->
<div class="a" style="left:431px;top:804px;width:569px;height:41px;background:#e0e0e0;border-bottom:4px solid #ccc;border-radius:0 0 3px 3px"></div>
<div class="dk" style="left:529px;top:812px;width:124px;padding-left:33px;box-sizing:border-box;font-size:11.500px;letter-spacing:-.2px">Написать в чат</div>
<svg class="a" style="left:540px;top:819px" width="17" height="16" viewBox="0 0 17 16"><path d="M1 1H16V11H6L3 14V11H1Z" fill="none" stroke="#dce7ec"/><path d="M6 6H7M8 6H9M10 6H11" stroke="#dce7ec"/></svg>
<div class="dk" style="left:747px;top:812px;width:132px;padding-left:31px;box-sizing:border-box;font-size:11.500px;letter-spacing:-.15px">Показать pop-up</div>
<svg class="a" style="left:759px;top:819px" width="17" height="14" viewBox="0 0 17 14"><path d="M5 1H16V9H13M1 4H12V13H1Z" fill="none" stroke="#dce7ec"/></svg>
<div class="a" style="left:250px;top:853px;width:752px;height:1px;background:#d0d0d0"></div>
<div class="a" style="left:250px;top:854px;width:774px;height:1px;background:#fff"></div>
</div></body></html>
